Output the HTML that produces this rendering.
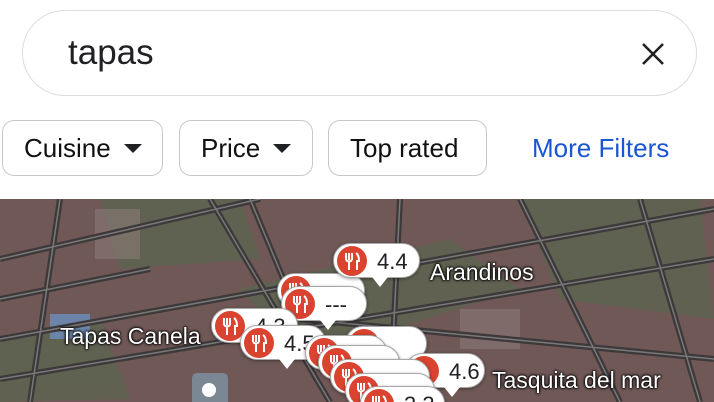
<!DOCTYPE html>
<html><head><meta charset="utf-8"><style>
*{margin:0;padding:0;box-sizing:border-box}
body{width:714px;height:402px;overflow:hidden;background:#fff;font-family:"Liberation Sans",sans-serif;position:relative}
.search{position:absolute;left:22px;top:10px;width:675px;height:86px;border:1.5px solid #dadce0;border-radius:43px;background:#fff}
.search span{position:absolute;left:45px;top:22px;font-size:35px;color:#202124}
.chip{position:absolute;top:120px;height:56px;border:1.5px solid #c8c8c8;border-radius:12px;font-size:26px;color:#111;display:flex;align-items:center;padding-left:21px}
.tri{display:inline-block;width:0;height:0;border-left:9px solid transparent;border-right:9px solid transparent;border-top:9px solid #202124;margin-left:13px}
.map{position:absolute;left:0;top:199px;width:714px;height:203px;background:#6f5856;overflow:hidden}
.pin{position:absolute;height:35px;background:#fff;border-radius:18px;border:1.5px solid #a8a8a8;box-shadow:0 1px 3px rgba(0,0,0,.4)}
.pin:after{content:"";position:absolute;left:38px;bottom:-10px;border-left:8px solid transparent;border-right:8px solid transparent;border-top:10px solid #fff}
.pin svg{position:absolute;left:2px;top:1px}
.pin b{position:absolute;left:43px;top:5px;font-weight:normal;font-size:22px;color:#202124}
.lab{position:absolute;color:#fff;font-size:23px;text-shadow:0 0 3px #000,0 0 2px #000,0 0 2px #000}
</style></head><body>
<div class="search"><span>tapas</span>
<svg style="position:absolute;left:618px;top:31px" width="24" height="24"><path d="M2 2L22 22M22 2L2 22" stroke="#202124" stroke-width="2.6"/></svg></div>
<div class="chip" style="left:2px;width:161px">Cuisine<i class="tri"></i></div>
<div class="chip" style="left:179px;width:134px">Price<i class="tri"></i></div>
<div class="chip" style="left:328px;width:159px">Top rated</div>
<div style="position:absolute;left:532px;top:133px;font-size:26px;color:#1a55d6">More Filters</div>
<div class="map">
<svg width="714" height="203" style="position:absolute;left:0;top:0">
<g fill="#5c6450" opacity=".8"><path d="M100 0L240 0L260 60L120 70Z"/><path d="M240 90L450 40L520 90L300 160Z"/><path d="M520 0L700 0L714 120L560 100Z"/><path d="M0 140L100 120L130 200L0 203Z"/></g>
<g fill="#8a7a78" opacity=".6"><rect x="95" y="10" width="45" height="50"/><rect x="460" y="110" width="60" height="40"/></g>
<rect x="50" y="115" width="40" height="25" fill="#6d8fbf" opacity=".8"/>
<g stroke="#3d393b" stroke-width="6" fill="none">
<path d="M0 60L260 0M0 140L714 10M0 180L714 60M60 0L30 203M210 0L330 203M250 0L300 120M400 0L390 203M520 0L620 203M640 0L700 203M0 100L150 70M300 120L714 160"/>
</g>
<g stroke="#888" stroke-width="1.5" fill="none" opacity=".8">
<path d="M0 60L260 0M0 140L714 10M0 180L714 60M60 0L30 203M210 0L330 203M250 0L300 120M400 0L390 203M520 0L620 203M640 0L700 203M0 100L150 70M300 120L714 160"/>
</g>
</svg>
<div class="lab" style="left:430px;top:60px">Arandinos</div>
<div class="lab" style="left:60px;top:124px">Tapas Canela</div>
<div class="lab" style="left:492px;top:168px">Tasquita del mar</div>
<div style="position:absolute;left:192px;top:174px;width:36px;height:40px;background:#7b8792;border-radius:5px"><div style="position:absolute;left:10px;top:10px;width:14px;height:14px;border-radius:50%;background:#fff"></div></div>
<!-- pins -->
<div class="pin" style="left:277px;top:74px;width:88px"><svg width="32" height="32"><circle cx="16" cy="16" r="15" fill="#d9432f"/><path d="M10 8V15M13 8V15M16 8V15M10 15Q13 18 16 15M13 16V25M20 8Q23 10 23 16H21V25" stroke="#fff" stroke-width="2" fill="none"/></svg></div>
<div class="pin" style="left:333px;top:44px;width:87px"><svg width="32" height="32"><circle cx="16" cy="16" r="15" fill="#d9432f"/><path d="M10 8V15M13 8V15M16 8V15M10 15Q13 18 16 15M13 16V25M20 8Q23 10 23 16H21V25" stroke="#fff" stroke-width="2" fill="none"/></svg><b>4.4</b></div>
<div class="pin" style="left:281px;top:87px;width:86px"><svg width="32" height="32"><circle cx="16" cy="16" r="15" fill="#d9432f"/><path d="M10 8V15M13 8V15M16 8V15M10 15Q13 18 16 15M13 16V25M20 8Q23 10 23 16H21V25" stroke="#fff" stroke-width="2" fill="none"/></svg><b>---</b></div>
<div class="pin" style="left:211px;top:109px;width:87px"><svg width="32" height="32"><circle cx="16" cy="16" r="15" fill="#d9432f"/><path d="M10 8V15M13 8V15M16 8V15M10 15Q13 18 16 15M13 16V25M20 8Q23 10 23 16H21V25" stroke="#fff" stroke-width="2" fill="none"/></svg><b>4.3</b></div>
<div class="pin" style="left:240px;top:126px;width:86px"><svg width="32" height="32"><circle cx="16" cy="16" r="15" fill="#d9432f"/><path d="M10 8V15M13 8V15M16 8V15M10 15Q13 18 16 15M13 16V25M20 8Q23 10 23 16H21V25" stroke="#fff" stroke-width="2" fill="none"/></svg><b>4.5</b></div>
<div class="pin" style="left:345px;top:127px;width:82px"><svg width="32" height="32"><circle cx="16" cy="16" r="15" fill="#d9432f"/></svg></div>
<div class="pin" style="left:305px;top:136px;width:82px"><svg width="32" height="32"><circle cx="16" cy="16" r="15" fill="#d9432f"/><path d="M10 8V15M13 8V15M16 8V15M10 15Q13 18 16 15M13 16V25M20 8Q23 10 23 16H21V25" stroke="#fff" stroke-width="2" fill="none"/></svg></div>
<div class="pin" style="left:405px;top:154px;width:80px"><svg width="32" height="32"><circle cx="16" cy="16" r="15" fill="#d9432f"/></svg><b>4.6</b></div>
<div class="pin" style="left:318px;top:146px;width:82px"><svg width="32" height="32"><circle cx="16" cy="16" r="15" fill="#d9432f"/><path d="M10 8V15M13 8V15M16 8V15M10 15Q13 18 16 15M13 16V25M20 8Q23 10 23 16H21V25" stroke="#fff" stroke-width="2" fill="none"/></svg></div>
<div class="pin" style="left:330px;top:160px;width:100px"><svg width="32" height="32"><circle cx="16" cy="16" r="15" fill="#d9432f"/><path d="M10 8V15M13 8V15M16 8V15M10 15Q13 18 16 15M13 16V25M20 8Q23 10 23 16H21V25" stroke="#fff" stroke-width="2" fill="none"/></svg></div>
<div class="pin" style="left:345px;top:174px;width:90px"><svg width="32" height="32"><circle cx="16" cy="16" r="15" fill="#d9432f"/><path d="M10 8V15M13 8V15M16 8V15M10 15Q13 18 16 15M13 16V25M20 8Q23 10 23 16H21V25" stroke="#fff" stroke-width="2" fill="none"/></svg></div>
<div class="pin" style="left:360px;top:187px;width:85px"><svg width="32" height="32"><circle cx="16" cy="16" r="15" fill="#d9432f"/><path d="M10 8V15M13 8V15M16 8V15M10 15Q13 18 16 15M13 16V25M20 8Q23 10 23 16H21V25" stroke="#fff" stroke-width="2" fill="none"/></svg><b>3.3</b></div>
</div>
</body></html>
